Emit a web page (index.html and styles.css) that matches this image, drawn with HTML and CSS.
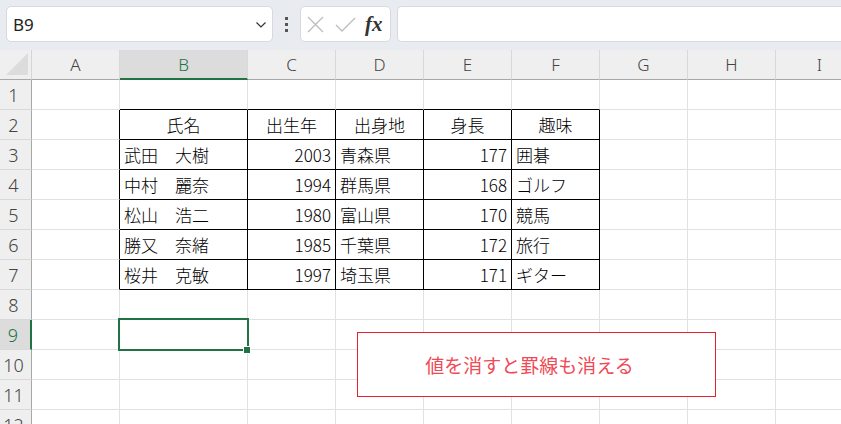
FILE: index.html
```html
<!DOCTYPE html>
<html lang="ja">
<head>
    <meta charset="UTF-8">
    <meta name="viewport" content="width=device-width, initial-scale=1.0">
    <title>罫線</title>
    <link rel="stylesheet" href="styles.css">
</head>
<body>
    <div class="toolbar">
        <div class="name-box">
            <span>B9</span>
            <svg class="chevron" width="10" height="6" viewBox="0 0 10 6"><path d="M0.5 0.5 L5 5 L9.5 0.5" fill="none" stroke="#333" stroke-width="1.2"/></svg>
        </div>
        <div class="dots"><i></i><i></i><i></i></div>
        <div class="fx-box">
            <svg width="17" height="17" viewBox="0 0 17 17"><path d="M1 1 L16 16 M16 1 L1 16" stroke="#bdbdbd" stroke-width="1.3"/></svg>
            <svg width="21" height="15" viewBox="0 0 21 15"><path d="M1 8 L7 14 L20 1" fill="none" stroke="#bdbdbd" stroke-width="1.3"/></svg>
            <span class="fx">fx</span>
        </div>
        <div class="formula"></div>
    </div>

    <div class="sheet">
        <div class="corner"></div>
        <div class="ch">A</div><div class="ch sel">B</div><div class="ch">C</div><div class="ch">D</div><div class="ch">E</div><div class="ch">F</div><div class="ch">G</div><div class="ch">H</div><div class="ch">I</div>

        <div class="rh">1</div>
        <div class="cell"></div><div class="cell tt"></div><div class="cell tt"></div><div class="cell tt"></div><div class="cell tt"></div><div class="cell tt"></div><div class="cell"></div><div class="cell"></div><div class="cell"></div>

        <div class="rh">2</div>
        <div class="cell tl"></div><div class="cell t c">氏名</div><div class="cell t c">出生年</div><div class="cell t c">出身地</div><div class="cell t c">身長</div><div class="cell t c">趣味</div><div class="cell"></div><div class="cell"></div><div class="cell"></div>

        <div class="rh">3</div>
        <div class="cell tl"></div><div class="cell t">武田　大樹</div><div class="cell t r">2003</div><div class="cell t">青森県</div><div class="cell t r">177</div><div class="cell t">囲碁</div><div class="cell"></div><div class="cell"></div><div class="cell"></div>

        <div class="rh">4</div>
        <div class="cell tl"></div><div class="cell t">中村　麗奈</div><div class="cell t r">1994</div><div class="cell t">群馬県</div><div class="cell t r">168</div><div class="cell t">ゴルフ</div><div class="cell"></div><div class="cell"></div><div class="cell"></div>

        <div class="rh">5</div>
        <div class="cell tl"></div><div class="cell t">松山　浩二</div><div class="cell t r">1980</div><div class="cell t">富山県</div><div class="cell t r">170</div><div class="cell t">競馬</div><div class="cell"></div><div class="cell"></div><div class="cell"></div>

        <div class="rh">6</div>
        <div class="cell tl"></div><div class="cell t">勝又　奈緒</div><div class="cell t r">1985</div><div class="cell t">千葉県</div><div class="cell t r">172</div><div class="cell t">旅行</div><div class="cell"></div><div class="cell"></div><div class="cell"></div>

        <div class="rh">7</div>
        <div class="cell tl"></div><div class="cell t">桜井　克敏</div><div class="cell t r">1997</div><div class="cell t">埼玉県</div><div class="cell t r">171</div><div class="cell t">ギター</div><div class="cell"></div><div class="cell"></div><div class="cell"></div>

        <div class="rh">8</div>
        <div class="cell"></div><div class="cell"></div><div class="cell"></div><div class="cell"></div><div class="cell"></div><div class="cell"></div><div class="cell"></div><div class="cell"></div><div class="cell"></div>

        <div class="rh sel">9</div>
        <div class="cell"></div><div class="cell active"><div class="selection"></div></div><div class="cell"></div><div class="cell"></div><div class="cell"></div><div class="cell"></div><div class="cell"></div><div class="cell"></div><div class="cell"></div>

        <div class="rh">10</div>
        <div class="cell"></div><div class="cell"></div><div class="cell"></div><div class="cell"></div><div class="cell"></div><div class="cell"></div><div class="cell"></div><div class="cell"></div><div class="cell"></div>

        <div class="rh">11</div>
        <div class="cell"></div><div class="cell"></div><div class="cell"></div><div class="cell"></div><div class="cell"></div><div class="cell"></div><div class="cell"></div><div class="cell"></div><div class="cell"></div>

        <div class="rh">12</div>
        <div class="cell"></div><div class="cell"></div><div class="cell"></div><div class="cell"></div><div class="cell"></div><div class="cell"></div><div class="cell"></div><div class="cell"></div><div class="cell"></div>
    </div>

    <div class="note">値を消すと罫線も消える</div>
</body>
</html>
```

FILE: styles.css
```css
* {
    margin: 0;
    padding: 0;
    box-sizing: border-box;
}
body {
    width: 841px;
    height: 424px;
    overflow: hidden;
    position: relative;
    background: white;
    font-family: "Noto Sans CJK JP", "Noto Sans", sans-serif;
    font-weight: 300;
    color: black;
}
.toolbar {
    height: 50px;
    background: #e8ebf0;
    display: flex;
    align-items: flex-start;
    padding: 6px 0 0 6px;
}
.name-box {
    width: 267px;
    height: 36px;
    background: white;
    border: 1px solid #d6dae0;
    border-radius: 5px;
    display: flex;
    align-items: center;
    justify-content: space-between;
    padding: 0 6px 0 6px;
    font-family: "Noto Sans", sans-serif;
    font-weight: 400;
    font-size: 17px;
    color: #222;
}
.chevron {
    margin-top: 2px;
}
.dots {
    width: 27px;
    height: 36px;
    display: flex;
    flex-direction: column;
    align-items: center;
    justify-content: center;
    gap: 3px;
}
.dots i {
    width: 3px;
    height: 3px;
    background: #555;
}
.fx-box {
    width: 91px;
    height: 36px;
    background: white;
    border: 1px solid #d6dae0;
    border-radius: 5px;
    display: flex;
    align-items: center;
    gap: 11px;
    padding-left: 6px;
}
.fx {
    font-family: "Liberation Serif", serif;
    font-style: italic;
    font-weight: bold;
    font-size: 21px;
    color: #333;
    margin-left: -2px;
}
.formula {
    flex: 1;
    height: 36px;
    margin-left: 6px;
    background: white;
    border: 1px solid #d6dae0;
    border-right: none;
    border-radius: 5px 0 0 5px;
}
.sheet {
    display: grid;
    grid-template-columns: 32px 88px 128px 88px 88px 88px 88px 88px 88px 88px;
    grid-auto-rows: 30px;
    width: 864px;
}
.corner {
    background: #efefef;
    border-right: 1px solid #d5d5d5;
    border-bottom: 1px solid #a8a8a8;
    position: relative;
}
.corner::after {
    content: "";
    position: absolute;
    left: 6px;
    top: 3px;
    width: 22px;
    height: 22px;
    background: #dcdcdc;
    clip-path: polygon(100% 0, 100% 100%, 0 100%);
}
.ch {
    background: #efefef;
    border-right: 1px solid #d9d9d9;
    border-bottom: 1px solid #a8a8a8;
    display: flex;
    align-items: center;
    justify-content: center;
    font-family: "Noto Sans", sans-serif;
    font-size: 17px;
    color: #444;
}
.ch.sel {
    background: #dcdcdc;
    border-bottom: 2px solid #217346;
    color: #217346;
}
.rh {
    background: #efefef;
    border-right: 1px solid #a8a8a8;
    border-bottom: 1px solid #d9d9d9;
    display: flex;
    align-items: center;
    justify-content: center;
    padding-right: 4px;
    font-family: "Noto Sans", sans-serif;
    font-size: 18px;
    color: #444;
}
.rh.sel {
    background: #dcdcdc;
    border-right: 2px solid #217346;
    color: #217346;
}
.cell {
    border-right: 1px solid #e1e1e1;
    border-bottom: 1px solid #e1e1e1;
    display: flex;
    align-items: center;
    padding: 0 4px;
    font-size: 17px;
    white-space: nowrap;
}
.cell.t {
    border-right-color: black;
    border-bottom-color: black;
}
.cell.tl {
    border-right-color: black;
}
.cell.tt {
    border-bottom-color: black;
}
.cell.c {
    justify-content: center;
}
.cell.r {
    justify-content: flex-end;
}
.cell.active {
    position: relative;
}
.selection {
    position: absolute;
    left: -2px;
    top: -2px;
    width: 131px;
    height: 33px;
    border: 2px solid #217346;
}
.selection::after {
    content: "";
    position: absolute;
    right: -3px;
    bottom: -4px;
    width: 6px;
    height: 6px;
    background: #217346;
    outline: 1px solid white;
}
.note {
    position: absolute;
    left: 357px;
    top: 332px;
    width: 359px;
    height: 65px;
    background: white;
    border: 1px solid #e8202b;
    display: flex;
    align-items: center;
    justify-content: center;
    padding-right: 14px;
    font-size: 19px;
    font-weight: 400;
    color: #ef4a55;
}
```
